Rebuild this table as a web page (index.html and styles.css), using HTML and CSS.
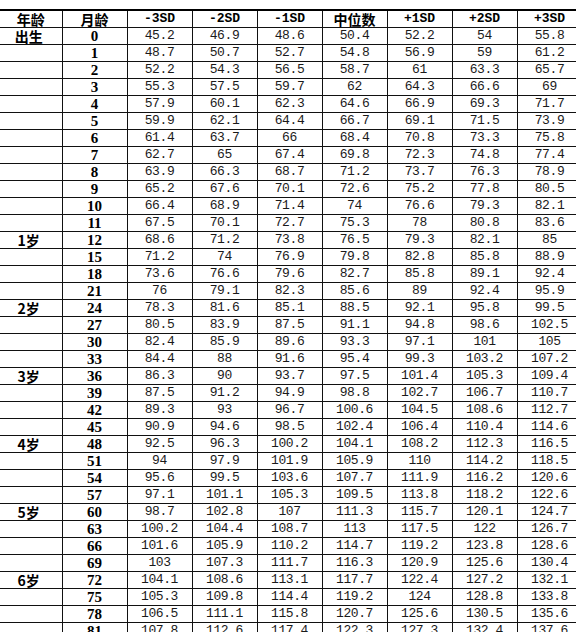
FILE: index.html
```html
<!DOCTYPE html>
<html lang="zh">
<head>
<meta charset="utf-8">
<title>身高标准表</title>
<link rel="stylesheet" href="styles.css">
</head>
<body>
<div class="sheet">
<table class="grid">
<colgroup><col class="c-age"><col class="c-m"><col class="c-v"><col class="c-v"><col class="c-v"><col class="c-v"><col class="c-v"><col class="c-v"><col class="c-v"></colgroup>
<thead>
<tr><th class="zh">年龄</th><th class="zh">月龄</th><th>-3SD</th><th>-2SD</th><th>-1SD</th><th class="zh">中位数</th><th>+1SD</th><th>+2SD</th><th>+3SD</th></tr>
</thead>
<tbody>
<tr><td class="age">出生</td><td class="m">0</td><td>45.2</td><td>46.9</td><td>48.6</td><td>50.4</td><td>52.2</td><td>54</td><td>55.8</td></tr>
<tr><td class="age"></td><td class="m">1</td><td>48.7</td><td>50.7</td><td>52.7</td><td>54.8</td><td>56.9</td><td>59</td><td>61.2</td></tr>
<tr><td class="age"></td><td class="m">2</td><td>52.2</td><td>54.3</td><td>56.5</td><td>58.7</td><td>61</td><td>63.3</td><td>65.7</td></tr>
<tr><td class="age"></td><td class="m">3</td><td>55.3</td><td>57.5</td><td>59.7</td><td>62</td><td>64.3</td><td>66.6</td><td>69</td></tr>
<tr><td class="age"></td><td class="m">4</td><td>57.9</td><td>60.1</td><td>62.3</td><td>64.6</td><td>66.9</td><td>69.3</td><td>71.7</td></tr>
<tr><td class="age"></td><td class="m">5</td><td>59.9</td><td>62.1</td><td>64.4</td><td>66.7</td><td>69.1</td><td>71.5</td><td>73.9</td></tr>
<tr><td class="age"></td><td class="m">6</td><td>61.4</td><td>63.7</td><td>66</td><td>68.4</td><td>70.8</td><td>73.3</td><td>75.8</td></tr>
<tr><td class="age"></td><td class="m">7</td><td>62.7</td><td>65</td><td>67.4</td><td>69.8</td><td>72.3</td><td>74.8</td><td>77.4</td></tr>
<tr><td class="age"></td><td class="m">8</td><td>63.9</td><td>66.3</td><td>68.7</td><td>71.2</td><td>73.7</td><td>76.3</td><td>78.9</td></tr>
<tr><td class="age"></td><td class="m">9</td><td>65.2</td><td>67.6</td><td>70.1</td><td>72.6</td><td>75.2</td><td>77.8</td><td>80.5</td></tr>
<tr><td class="age"></td><td class="m">10</td><td>66.4</td><td>68.9</td><td>71.4</td><td>74</td><td>76.6</td><td>79.3</td><td>82.1</td></tr>
<tr><td class="age"></td><td class="m">11</td><td>67.5</td><td>70.1</td><td>72.7</td><td>75.3</td><td>78</td><td>80.8</td><td>83.6</td></tr>
<tr><td class="age">1岁</td><td class="m">12</td><td>68.6</td><td>71.2</td><td>73.8</td><td>76.5</td><td>79.3</td><td>82.1</td><td>85</td></tr>
<tr><td class="age"></td><td class="m">15</td><td>71.2</td><td>74</td><td>76.9</td><td>79.8</td><td>82.8</td><td>85.8</td><td>88.9</td></tr>
<tr><td class="age"></td><td class="m">18</td><td>73.6</td><td>76.6</td><td>79.6</td><td>82.7</td><td>85.8</td><td>89.1</td><td>92.4</td></tr>
<tr><td class="age"></td><td class="m">21</td><td>76</td><td>79.1</td><td>82.3</td><td>85.6</td><td>89</td><td>92.4</td><td>95.9</td></tr>
<tr><td class="age">2岁</td><td class="m">24</td><td>78.3</td><td>81.6</td><td>85.1</td><td>88.5</td><td>92.1</td><td>95.8</td><td>99.5</td></tr>
<tr><td class="age"></td><td class="m">27</td><td>80.5</td><td>83.9</td><td>87.5</td><td>91.1</td><td>94.8</td><td>98.6</td><td>102.5</td></tr>
<tr><td class="age"></td><td class="m">30</td><td>82.4</td><td>85.9</td><td>89.6</td><td>93.3</td><td>97.1</td><td>101</td><td>105</td></tr>
<tr><td class="age"></td><td class="m">33</td><td>84.4</td><td>88</td><td>91.6</td><td>95.4</td><td>99.3</td><td>103.2</td><td>107.2</td></tr>
<tr><td class="age">3岁</td><td class="m">36</td><td>86.3</td><td>90</td><td>93.7</td><td>97.5</td><td>101.4</td><td>105.3</td><td>109.4</td></tr>
<tr><td class="age"></td><td class="m">39</td><td>87.5</td><td>91.2</td><td>94.9</td><td>98.8</td><td>102.7</td><td>106.7</td><td>110.7</td></tr>
<tr><td class="age"></td><td class="m">42</td><td>89.3</td><td>93</td><td>96.7</td><td>100.6</td><td>104.5</td><td>108.6</td><td>112.7</td></tr>
<tr><td class="age"></td><td class="m">45</td><td>90.9</td><td>94.6</td><td>98.5</td><td>102.4</td><td>106.4</td><td>110.4</td><td>114.6</td></tr>
<tr><td class="age">4岁</td><td class="m">48</td><td>92.5</td><td>96.3</td><td>100.2</td><td>104.1</td><td>108.2</td><td>112.3</td><td>116.5</td></tr>
<tr><td class="age"></td><td class="m">51</td><td>94</td><td>97.9</td><td>101.9</td><td>105.9</td><td>110</td><td>114.2</td><td>118.5</td></tr>
<tr><td class="age"></td><td class="m">54</td><td>95.6</td><td>99.5</td><td>103.6</td><td>107.7</td><td>111.9</td><td>116.2</td><td>120.6</td></tr>
<tr><td class="age"></td><td class="m">57</td><td>97.1</td><td>101.1</td><td>105.3</td><td>109.5</td><td>113.8</td><td>118.2</td><td>122.6</td></tr>
<tr><td class="age">5岁</td><td class="m">60</td><td>98.7</td><td>102.8</td><td>107</td><td>111.3</td><td>115.7</td><td>120.1</td><td>124.7</td></tr>
<tr><td class="age"></td><td class="m">63</td><td>100.2</td><td>104.4</td><td>108.7</td><td>113</td><td>117.5</td><td>122</td><td>126.7</td></tr>
<tr><td class="age"></td><td class="m">66</td><td>101.6</td><td>105.9</td><td>110.2</td><td>114.7</td><td>119.2</td><td>123.8</td><td>128.6</td></tr>
<tr><td class="age"></td><td class="m">69</td><td>103</td><td>107.3</td><td>111.7</td><td>116.3</td><td>120.9</td><td>125.6</td><td>130.4</td></tr>
<tr><td class="age">6岁</td><td class="m">72</td><td>104.1</td><td>108.6</td><td>113.1</td><td>117.7</td><td>122.4</td><td>127.2</td><td>132.1</td></tr>
<tr><td class="age"></td><td class="m">75</td><td>105.3</td><td>109.8</td><td>114.4</td><td>119.2</td><td>124</td><td>128.8</td><td>133.8</td></tr>
<tr><td class="age"></td><td class="m">78</td><td>106.5</td><td>111.1</td><td>115.8</td><td>120.7</td><td>125.6</td><td>130.5</td><td>135.6</td></tr>
<tr><td class="age"></td><td class="m">81</td><td>107.8</td><td>112.6</td><td>117.4</td><td>122.3</td><td>127.3</td><td>132.4</td><td>137.6</td></tr>
</tbody>
</table>
</div>
</body>
</html>
```
FILE: styles.css
```css
html, body {
  margin: 0;
  padding: 0;
  background: #fff;
  overflow: hidden;
}
body {
  width: 576px;
  height: 632px;
}
.sheet {
  padding-top: 9px;
  width: 600px;
}
.grid {
  border-collapse: collapse;
  table-layout: fixed;
  width: 582px;
  border-top: 2px solid #000;
  color: #1a1a1a;
}
.c-age { width: 62px; }
.c-m, .c-v { width: 65px; }
.grid th, .grid td {
  height: 16px;
  padding: 0;
  line-height: 16px;
  text-align: center;
  vertical-align: middle;
  border-right: 1px solid #111;
  border-bottom: 1px solid #111;
  white-space: nowrap;
}
.grid td {
  font-family: "Liberation Mono", monospace;
  font-size: 13px;
  letter-spacing: -0.4px;
}
.grid th {
  font-family: "Liberation Mono", monospace;
  font-size: 13px;
  font-weight: 700;
  color: #000;
}
.grid th.zh,
.grid td.age {
  font-family: "Noto Sans CJK SC", sans-serif;
  font-size: 14px;
  line-height: 16px;
  font-weight: 700;
  letter-spacing: 0;
  color: #000;
}
.grid td.age {
  padding-right: 4px;
}
.grid td.m {
  font-family: "Liberation Serif", serif;
  font-size: 15px;
  font-weight: 700;
  letter-spacing: 0;
  color: #000;
}
```
